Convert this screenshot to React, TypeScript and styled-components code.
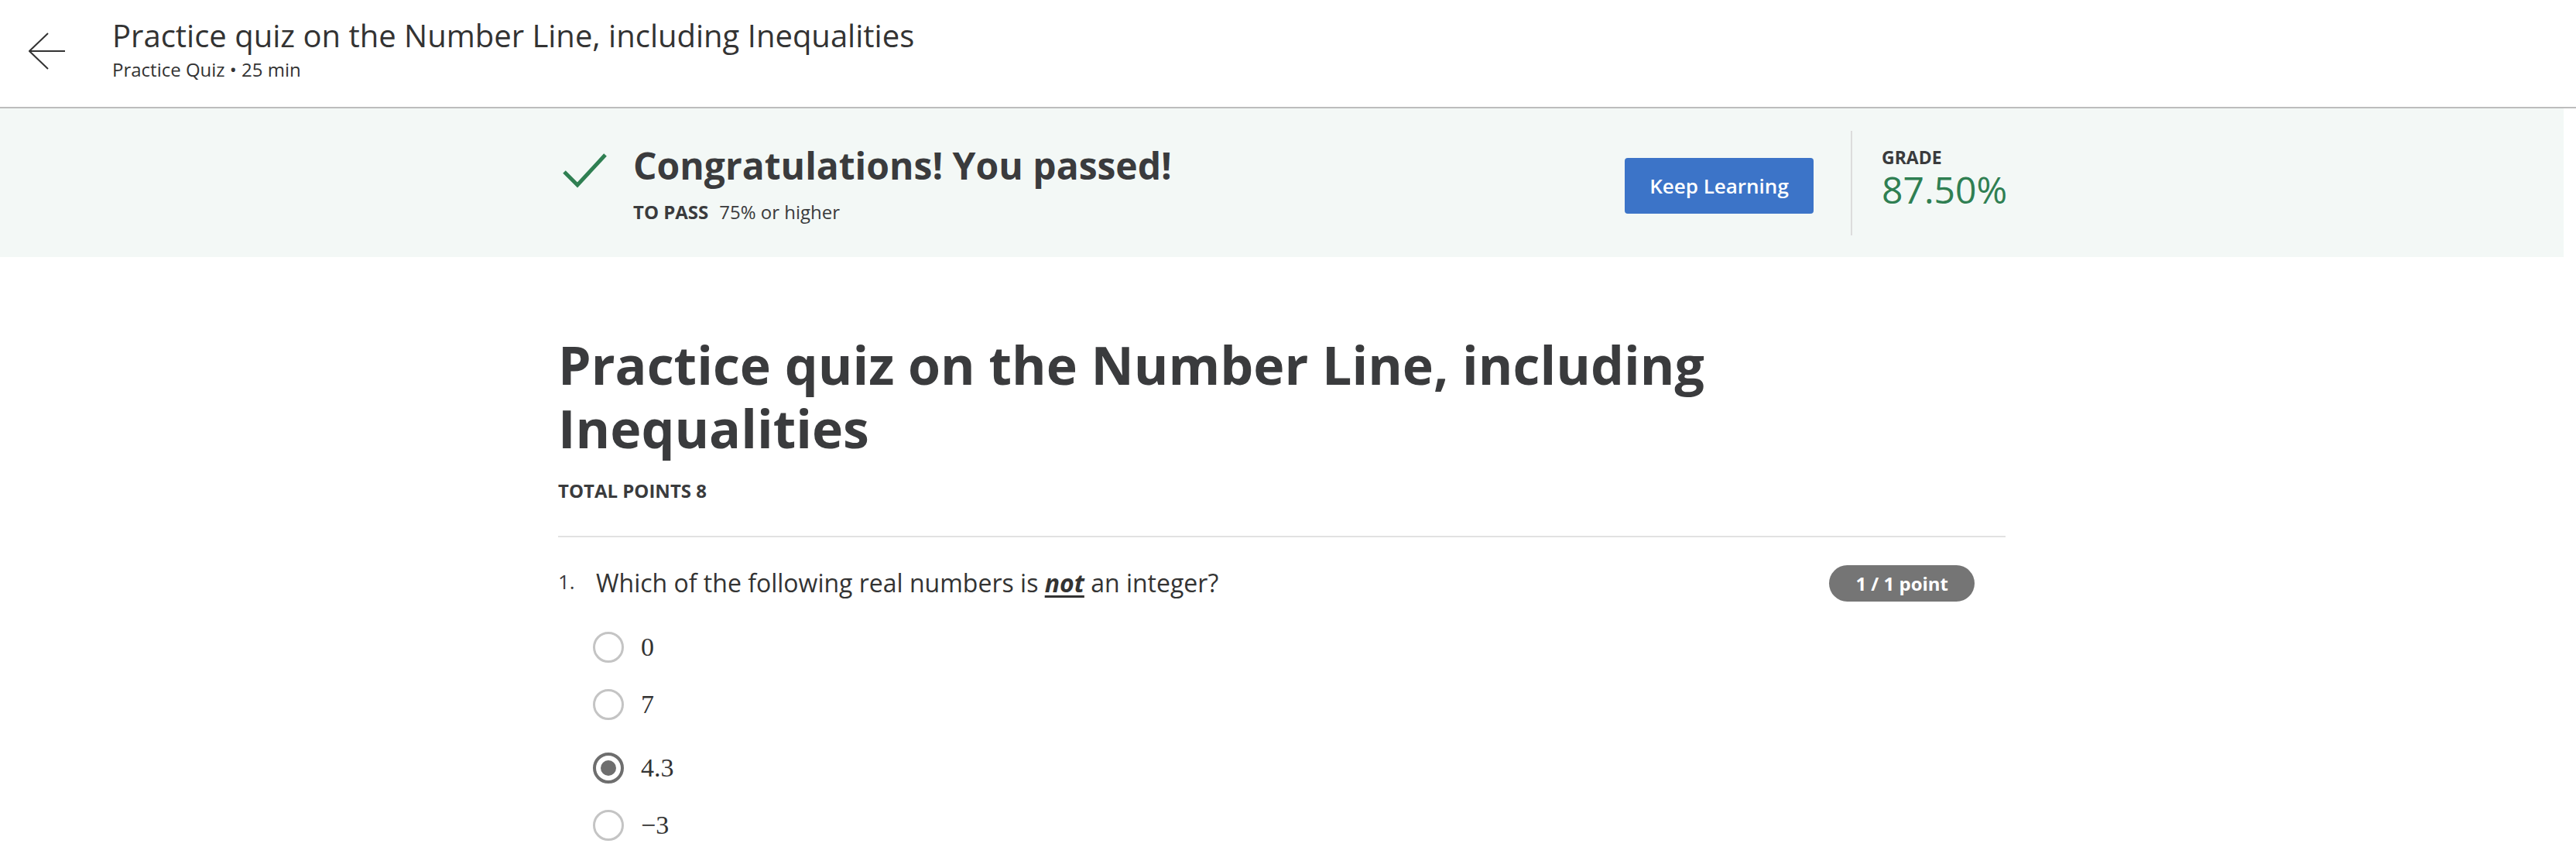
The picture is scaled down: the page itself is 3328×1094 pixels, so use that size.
import React from "react";
import styled, { createGlobalStyle } from "styled-components";

const Global = createGlobalStyle`
  html, body { margin: 0; padding: 0; background: #ffffff; overflow: hidden; }
  body { font-family: "Open Sans", "Noto Sans", Arial, sans-serif; color: #3a3b3d; }
  * { box-sizing: border-box; }
`;

const Header = styled.header`
  height: 140px;
  border-bottom: 2px solid #bdbdbd;
  display: flex;
  align-items: flex-start;
  padding-left: 37px;
`;

const BackButton = styled.button`
  width: 48px;
  height: 48px;
  margin-top: 42px;
  padding: 0;
  border: none;
  background: transparent;
  display: flex;
  align-items: center;
  justify-content: center;
  cursor: pointer;
`;

const HeaderText = styled.div`
  margin-left: 60px;
  padding-top: 22px;
  display: flex;
  flex-direction: column;
`;

const HeaderTitle = styled.h1`
  margin: 0;
  font-size: 40px;
  line-height: 48px;
  font-weight: 400;
  color: #333333;
`;

const HeaderSub = styled.div`
  margin-top: 4px;
  font-size: 24px;
  line-height: 32px;
  color: #333333;
`;

const Main = styled.main`
  width: calc(100% - 16px);
`;

const Banner = styled.section`
  height: 192px;
  background: #f3f8f6;
  display: flex;
  justify-content: center;
`;

const Container = styled.div`
  width: 1870px;
`;

const BannerInner = styled(Container)`
  display: flex;
  align-items: center;
  justify-content: space-between;
`;

const PassGroup = styled.div`
  display: flex;
  align-items: flex-start;
  margin-top: 1px;
`;

const CheckSvg = styled.svg`
  width: 64px;
  height: 48px;
  margin-top: 11px;
  flex: none;
`;

const PassText = styled.div`
  margin-left: 33px;
  display: flex;
  flex-direction: column;
`;

const Congrats = styled.h2`
  margin: 0 0 15px;
  font-size: 48px;
  line-height: 60px;
  font-weight: 700;
  color: #3a3b3d;
`;

const PassLine = styled.div`
  font-size: 24px;
  line-height: 30px;
  color: #3a3b3d;
  display: flex;
  gap: 14px;
`;

const PassLabel = styled.span`
  font-weight: 700;
`;

const ResultGroup = styled.div`
  display: flex;
  align-items: center;
  height: 135px;
`;

const PrimaryButton = styled.button`
  width: 244px;
  height: 72px;
  margin-top: 8px;
  border: none;
  border-radius: 4px;
  background: #3c74c8;
  color: #ffffff;
  font-family: "Open Sans", Arial, sans-serif;
  font-size: 26px;
  font-weight: 600;
  cursor: pointer;
`;

const VDivider = styled.div`
  width: 2px;
  align-self: stretch;
  background: #dcdcdc;
  margin-left: 48px;
`;

const GradeBlock = styled.div`
  width: 160px;
  margin-left: 38px;
  margin-bottom: 4px;
  display: flex;
  flex-direction: column;
`;

const GradeLabel = styled.div`
  font-size: 23px;
  line-height: 22px;
  font-weight: 700;
  color: #3a3b3d;
`;

const GradeValue = styled.div`
  font-size: 48px;
  line-height: 62px;
  color: #2f7f52;
`;

const Content = styled.section`
  display: flex;
  justify-content: center;
`;

const QuizTitle = styled.h1`
  margin: 98px 0 0;
  max-width: 1600px;
  font-size: 68px;
  line-height: 82px;
  font-weight: 700;
  color: #3a3b3d;
`;

const TotalPoints = styled.div`
  margin-top: 25px;
  font-size: 24px;
  line-height: 30px;
  font-weight: 700;
  color: #3a3b3d;
`;

const Rule = styled.hr`
  margin: 43px 0 0;
  border: none;
  height: 2px;
  background: #e2e2e2;
`;

const QuestionRow = styled.div`
  margin-top: 35px;
  display: flex;
  align-items: center;
`;

const QNumber = styled.span`
  align-self: flex-start;
  margin-top: 6px;
  width: 49px;
  flex: none;
  font-size: 26px;
  line-height: 32px;
  color: #3a3b3d;
`;

const QText = styled.div`
  flex: 1;
  font-size: 32px;
  line-height: 48px;
  color: #333333;
`;

const Emph = styled.em`
  font-weight: 700;
  text-decoration: underline;
  text-underline-offset: 4px;
`;

const PointBadge = styled.span`
  flex: none;
  height: 47px;
  margin-right: 40px;
  padding: 0 34px;
  border-radius: 24px;
  background: #757575;
  color: #ffffff;
  font-size: 24px;
  font-weight: 700;
  display: flex;
  align-items: center;
`;

const Options = styled.div`
  margin-top: 22px;
  padding-left: 45px;
  display: flex;
  flex-direction: column;
`;

const OptionRow = styled.label<{ $selected?: boolean }>`
  height: 74px;
  display: flex;
  align-items: center;
  margin-top: ${(p) => (p.$selected ? "8px" : "0")};
`;

const Radio = styled.span<{ $checked?: boolean }>`
  width: 40px;
  height: 40px;
  border-radius: 50%;
  border: ${(p) => (p.$checked ? "4px solid #6e6e6e" : "3px solid #c4c4c4")};
  display: flex;
  align-items: center;
  justify-content: center;
  flex: none;
  &::after {
    content: "";
    display: ${(p) => (p.$checked ? "block" : "none")};
    width: 20px;
    height: 20px;
    border-radius: 50%;
    background: #6e6e6e;
  }
`;

const MathText = styled.span`
  margin-left: 22px;
  font-family: "Liberation Serif", "DejaVu Serif", serif;
  font-size: 34px;
  color: #333333;
`;

const options = [
  { label: "0", checked: false },
  { label: "7", checked: false },
  { label: "4.3", checked: true },
  { label: "\u22123", checked: false },
];

export default function App() {
  return (
    <>
      <Global />
      <Header>
        <BackButton aria-label="Back">
          <svg width="48" height="48" viewBox="0 0 48 48" fill="none">
            <path d="M1 24 H47 M25 1 L1 24 L25 47" stroke="#333" strokeWidth="2" />
          </svg>
        </BackButton>
        <HeaderText>
          <HeaderTitle>Practice quiz on the Number Line, including Inequalities</HeaderTitle>
          <HeaderSub>Practice Quiz • 25 min</HeaderSub>
        </HeaderText>
      </Header>
      <Main>
        <Banner>
          <BannerInner>
            <PassGroup>
              <CheckSvg viewBox="0 0 64 48">
                <path d="M8 27 L25 44 L61 5" stroke="#2f7f52" strokeWidth="5" fill="none" />
              </CheckSvg>
              <PassText>
                <Congrats>Congratulations! You passed!</Congrats>
                <PassLine>
                  <PassLabel>TO PASS</PassLabel>
                  <span>75% or higher</span>
                </PassLine>
              </PassText>
            </PassGroup>
            <ResultGroup>
              <PrimaryButton>Keep Learning</PrimaryButton>
              <VDivider />
              <GradeBlock>
                <GradeLabel>GRADE</GradeLabel>
                <GradeValue>87.50%</GradeValue>
              </GradeBlock>
            </ResultGroup>
          </BannerInner>
        </Banner>
        <Content>
          <Container>
            <QuizTitle>Practice quiz on the Number Line, including Inequalities</QuizTitle>
            <TotalPoints>TOTAL POINTS 8</TotalPoints>
            <Rule />
            <QuestionRow>
              <QNumber>1.</QNumber>
              <QText>
                Which of the following real numbers is <Emph>not</Emph> an integer?
              </QText>
              <PointBadge>1 / 1 point</PointBadge>
            </QuestionRow>
            <Options>
              {options.map((o) => (
                <OptionRow key={o.label} $selected={o.checked}>
                  <Radio $checked={o.checked} />
                  <MathText>{o.label}</MathText>
                </OptionRow>
              ))}
            </Options>
          </Container>
        </Content>
      </Main>
    </>
  );
}
